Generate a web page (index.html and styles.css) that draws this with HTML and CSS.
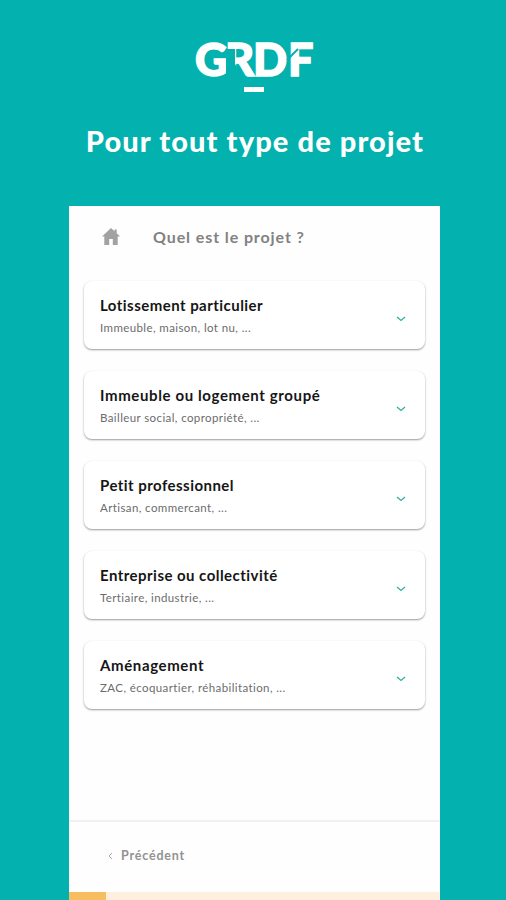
FILE: index.html
```html
<!DOCTYPE html>
<html lang="fr">
  <head>
    <meta charset="UTF-8" />
    <meta name="viewport" content="width=device-width, initial-scale=1.0" />
    <title>GRDF - Quel est le projet ?</title>
    <link rel="stylesheet" href="styles.css">
  </head>
  <body>
    <!-- Header -->
    <header class="header">
      <svg class="logo" width="120" height="56" viewBox="0 0 120 56">
        <text class="logo-text" x="0 30 58 93" y="40">GRDF</text>
        <path class="logo-gap" d="M31 13h9v15l10 14H31z" />
        <path class="logo-cut" d="M92 24l11-11" />
        <rect x="49" y="51" width="20" height="5" fill="#fff" />
      </svg>
      <h1 class="headline">Pour tout type de projet</h1>
    </header>

    <!-- Phone screen -->
    <main class="screen">
      <div class="topbar">
        <svg class="home-icon" width="18" height="17" viewBox="0 0 18 17">
          <path d="M9 0 0 8.5h2.3V17h4.9v-6h3.6v6h4.9V8.5H18L14.7 5.3V1.5h-2.2v1.8z" />
        </svg>
        <p class="question">Quel est le projet ?</p>
      </div>

      <div class="cards">
        <div class="card">
          <div>
            <p class="title">Lotissement particulier</p>
            <p class="subtitle">Immeuble, maison, lot nu, ...</p>
          </div>
          <svg class="chevron" width="10" height="6" viewBox="0 0 10 6"><path d="M1 1l4 3.5L9 1" /></svg>
        </div>
        <div class="card">
          <div>
            <p class="title title-wide">Immeuble ou logement groupé</p>
            <p class="subtitle">Bailleur social, copropriété, ...</p>
          </div>
          <svg class="chevron" width="10" height="6" viewBox="0 0 10 6"><path d="M1 1l4 3.5L9 1" /></svg>
        </div>
        <div class="card">
          <div>
            <p class="title">Petit professionnel</p>
            <p class="subtitle">Artisan, commercant, ...</p>
          </div>
          <svg class="chevron" width="10" height="6" viewBox="0 0 10 6"><path d="M1 1l4 3.5L9 1" /></svg>
        </div>
        <div class="card">
          <div>
            <p class="title">Entreprise ou collectivité</p>
            <p class="subtitle">Tertiaire, industrie, ...</p>
          </div>
          <svg class="chevron" width="10" height="6" viewBox="0 0 10 6"><path d="M1 1l4 3.5L9 1" /></svg>
        </div>
        <div class="card">
          <div>
            <p class="title title-wide">Aménagement</p>
            <p class="subtitle">ZAC, écoquartier, réhabilitation, ...</p>
          </div>
          <svg class="chevron" width="10" height="6" viewBox="0 0 10 6"><path d="M1 1l4 3.5L9 1" /></svg>
        </div>
      </div>

      <!-- Bottom navigation -->
      <div class="footer">
        <svg class="back-icon" width="5" height="8" viewBox="0 0 5 8"><path d="M4 1L1 4l3 3" /></svg>
        <span class="back-label">Précédent</span>
      </div>
      <div class="progress"><div class="progress-bar"></div></div>
    </main>
  </body>
</html>
```
FILE: styles.css
```css
* {
  margin: 0;
  padding: 0;
  box-sizing: border-box;
}
body {
  height: 900px;
  display: flex;
  flex-direction: column;
  overflow: hidden;
  background-color: #03b1ae;
  font-family: Lato, "Liberation Sans", sans-serif;
}

.header {
  height: 206px;
  padding-top: 36px;
  display: flex;
  flex-direction: column;
  align-items: center;
}

.logo {
  margin-left: 3px;
  overflow: visible;
}

.logo-text {
  font-size: 45px;
  font-weight: 900;
  fill: #fff;
  stroke: #fff;
  stroke-width: 1.5;
}

.logo-gap {
  fill: #03b1ae;
}

.logo-cut {
  fill: none;
  stroke: #03b1ae;
  stroke-width: 2;
}

.headline {
  margin-top: 32px;
  margin-left: 4px;
  color: #fff;
  font-size: 29px;
  line-height: 34px;
  font-weight: 900;
  letter-spacing: 1.1px;
  white-space: nowrap;
}

.screen {
  width: 371px;
  height: 694px;
  margin-left: 69px;
  display: flex;
  flex-direction: column;
  background-color: #fefefe;
}

.topbar {
  height: 75px;
  padding: 0 33px 14px;
  display: flex;
  align-items: center;
  gap: 33px;
}

.home-icon {
  fill: #a2a2a2;
}

.question {
  color: #828282;
  font-size: 16px;
  font-weight: 700;
  letter-spacing: 0.9px;
}

.cards {
  flex: 1;
  padding: 0 15px;
  display: flex;
  flex-direction: column;
  gap: 22px;
}

.card {
  height: 68px;
  padding: 2px 19px 0 16px;
  display: flex;
  align-items: center;
  justify-content: space-between;
  border-radius: 8px;
  background-color: #fff;
  box-shadow: 0 1px 2px rgba(0, 0, 0, 0.4);
}

.title {
  color: #161616;
  font-size: 15px;
  line-height: 22px;
  font-weight: 700;
  letter-spacing: 0.46px;
}

.title-wide {
  letter-spacing: 0.62px;
}

.subtitle {
  margin-top: 2px;
  color: #6c6c6c;
  font-size: 11.5px;
  line-height: 20px;
  letter-spacing: 0.4px;
}

.chevron {
  margin-top: 6px;
  fill: none;
  stroke: #30b39f;
  stroke-width: 1.3;
}

.footer {
  height: 72px;
  padding: 0 0 3px 39px;
  display: flex;
  align-items: center;
  gap: 8px;
  border-top: 2px solid #f1f1f1;
}

.back-icon {
  fill: none;
  stroke: #aaa;
}

.back-label {
  color: #929292;
  font-size: 12.5px;
  font-weight: 700;
  letter-spacing: 0.8px;
}

.progress {
  height: 8px;
  background-color: #fdf0df;
}

.progress-bar {
  width: 37px;
  height: 8px;
  background-color: #f8bd60;
}
```
